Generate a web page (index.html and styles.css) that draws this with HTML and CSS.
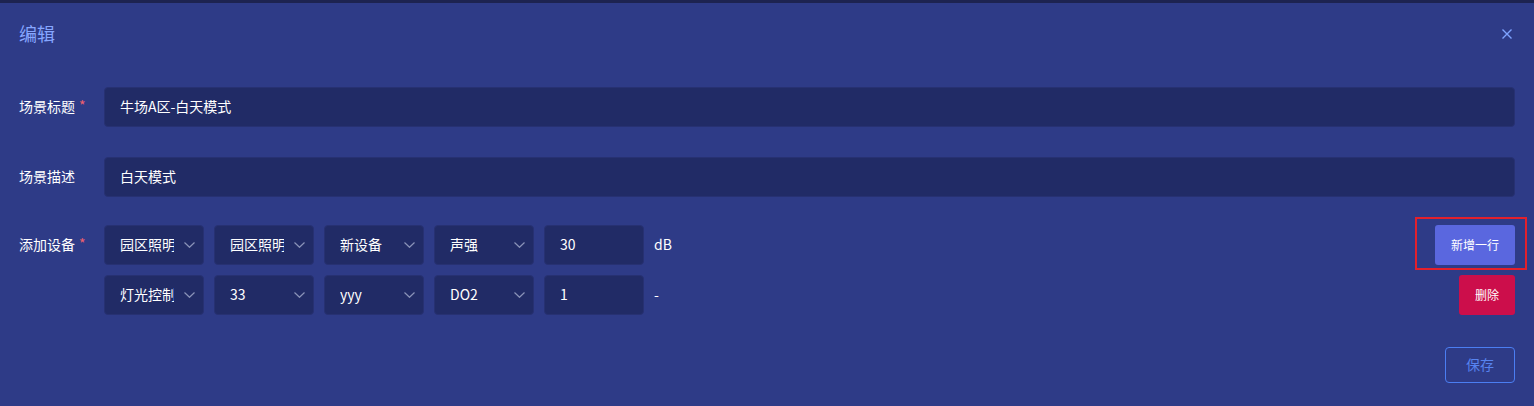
FILE: index.html
```html
<!DOCTYPE html>
<html lang="zh-CN">
<head>
<meta charset="utf-8">
<link rel="stylesheet" href="styles.css">
</head>
<body>
<div class="strip"></div>
<div class="dialog">
  <div class="header">
    <span class="title">编辑</span>
    <svg class="close" width="12" height="12" viewBox="0 0 12 12"><path d="M1.5 1.5L10.5 10.5M10.5 1.5L1.5 10.5" stroke="#7ea3ff" stroke-width="1.4" fill="none"/></svg>
  </div>
  <div class="form">
    <div class="row r1">
      <div class="label">场景标题<span class="req">*</span></div>
      <div class="field">牛场A区-白天模式</div>
    </div>
    <div class="row r2">
      <div class="label">场景描述</div>
      <div class="field">白天模式</div>
    </div>
    <div class="row devices">
      <div class="label lbl-top">添加设备<span class="req">*</span></div>
      <div class="dev-list">
        <div class="dev-row">
          <div class="sel"><span class="sel-text">园区照明</span><svg class="chev" width="11" height="6" viewBox="0 0 11 6"><path d="M0.5 0.5L5.5 5.3L10.5 0.5" stroke="#8a93b8" stroke-width="1.2" fill="none"/></svg></div>
          <div class="sel"><span class="sel-text">园区照明</span><svg class="chev" width="11" height="6" viewBox="0 0 11 6"><path d="M0.5 0.5L5.5 5.3L10.5 0.5" stroke="#8a93b8" stroke-width="1.2" fill="none"/></svg></div>
          <div class="sel"><span class="sel-text">新设备</span><svg class="chev" width="11" height="6" viewBox="0 0 11 6"><path d="M0.5 0.5L5.5 5.3L10.5 0.5" stroke="#8a93b8" stroke-width="1.2" fill="none"/></svg></div>
          <div class="sel"><span class="sel-text">声强</span><svg class="chev" width="11" height="6" viewBox="0 0 11 6"><path d="M0.5 0.5L5.5 5.3L10.5 0.5" stroke="#8a93b8" stroke-width="1.2" fill="none"/></svg></div>
          <div class="num">30</div>
          <span class="unit">dB</span>
          <div class="spacer"></div>
          <div class="btn-wrap"><button class="btn add">新增一行</button><span class="mark"></span></div>
        </div>
        <div class="dev-row">
          <div class="sel"><span class="sel-text">灯光控制</span><svg class="chev" width="11" height="6" viewBox="0 0 11 6"><path d="M0.5 0.5L5.5 5.3L10.5 0.5" stroke="#8a93b8" stroke-width="1.2" fill="none"/></svg></div>
          <div class="sel"><span class="sel-text">33</span><svg class="chev" width="11" height="6" viewBox="0 0 11 6"><path d="M0.5 0.5L5.5 5.3L10.5 0.5" stroke="#8a93b8" stroke-width="1.2" fill="none"/></svg></div>
          <div class="sel"><span class="sel-text">yyy</span><svg class="chev" width="11" height="6" viewBox="0 0 11 6"><path d="M0.5 0.5L5.5 5.3L10.5 0.5" stroke="#8a93b8" stroke-width="1.2" fill="none"/></svg></div>
          <div class="sel"><span class="sel-text">DO2</span><svg class="chev" width="11" height="6" viewBox="0 0 11 6"><path d="M0.5 0.5L5.5 5.3L10.5 0.5" stroke="#8a93b8" stroke-width="1.2" fill="none"/></svg></div>
          <div class="num">1</div>
          <span class="unit">-</span>
          <div class="spacer"></div>
          <button class="btn del">删除</button>
        </div>
      </div>
    </div>
    <div class="footer">
      <button class="btn save">保存</button>
    </div>
  </div>
</div>
</body>
</html>
```
FILE: styles.css
```css
* { box-sizing: border-box; }
html, body {
  margin: 0;
  padding: 0;
  background: #2e3b87;
  height: 406px;
  overflow: hidden;
  font-family: "Noto Sans CJK SC", "Noto Sans", sans-serif;
  color: #ffffff;
}
.strip {
  height: 3px;
  background: #1d2350;
}
.dialog {
  padding: 0 19px;
}
.header {
  height: 64px;
  display: flex;
  align-items: center;
  justify-content: space-between;
}
.title {
  font-size: 18px;
  color: #86a6ff;
  line-height: 24px;
  padding-bottom: 4px;
}
.close {
  margin-right: 2px;
  margin-bottom: 2px;
}
.form {
  padding-top: 20px;
}
.row {
  display: flex;
  align-items: center;
}
.r1 { margin-bottom: 30px; }
.r2 { margin-bottom: 28px; }
.devices { align-items: flex-start; }
.label {
  width: 85px;
  flex: none;
  font-size: 14px;
  line-height: 20px;
  color: #ffffff;
  padding-bottom: 3px;
}
.lbl-top {
  margin-top: 9px;
}
.req {
  color: #f0606e;
  margin-left: 4px;
  position: relative;
  top: -1px;
}
.field {
  flex: 1;
  height: 40px;
  background: #212b66;
  border: 1px solid #273172;
  border-radius: 4px;
  padding: 0 15px 3px;
  display: flex;
  align-items: center;
  font-size: 14px;
  color: #ffffff;
}
.dev-list {
  flex: 1;
  display: flex;
  flex-direction: column;
  gap: 10px;
}
.dev-row {
  display: flex;
  align-items: center;
  gap: 10px;
  height: 40px;
}
.sel, .num {
  width: 100px;
  height: 40px;
  flex: none;
  background: #212b66;
  border: 1px solid #273172;
  border-radius: 4px;
  display: flex;
  align-items: center;
  padding: 0 0 3px 15px;
  font-size: 14px;
  color: #ffffff;
}
.sel-text {
  width: 54px;
  overflow: hidden;
  white-space: nowrap;
}
.chev {
  margin-left: 10px;
  margin-top: 3px;
}
.unit {
  font-size: 14px;
  color: #ffffff;
  padding-bottom: 3px;
}
.spacer { flex: 1; }
.btn {
  border: none;
  border-radius: 3px;
  font-family: "Noto Sans CJK SC", "Noto Sans", sans-serif;
  font-size: 12px;
  color: #ffffff;
  height: 40px;
  padding: 0 0 2px;
  cursor: pointer;
}
.btn-wrap {
  position: relative;
  display: flex;
}
.add {
  width: 80px;
  background: #5a67df;
}
.mark {
  position: absolute;
  left: -20px;
  right: -12px;
  top: -8px;
  bottom: -5px;
  border: 2px solid #e3202b;
  pointer-events: none;
}
.del {
  width: 56px;
  background: #cc0e4b;
}
.footer {
  display: flex;
  justify-content: flex-end;
  margin-top: 32px;
}
.save {
  width: 70px;
  height: 36px;
  background: transparent;
  border: 1px solid #4b7ef2;
  border-radius: 4px;
  color: #5783ef;
  font-size: 14px;
}
```
